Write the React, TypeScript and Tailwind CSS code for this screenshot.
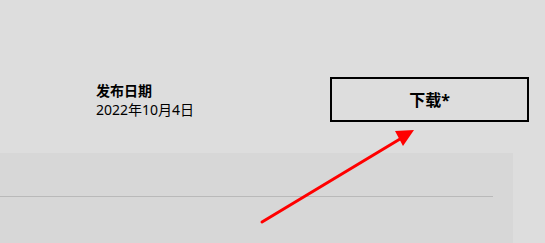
import React from "react";

export default function App() {
  return (
    <div
      className="relative w-[545px] h-[243px] overflow-hidden bg-[#dddddd] text-black"
      style={{ fontFamily: '"Noto Sans", "Noto Sans CJK SC", sans-serif' }}
    >
      <div className="flex h-[153px] items-start">
        <div className="ml-[96px] mt-[81px] flex flex-col leading-[19px] text-[14px]">
          <span className="font-bold">发布日期</span>
          <span>2022年10月4日</span>
        </div>
        <button className="ml-auto mr-[16px] mt-[77px] flex h-[45px] w-[199px] items-center justify-center border-2 border-black text-[16px] font-bold">
          下载*
        </button>
      </div>
      <div className="h-[90px] w-[513px] bg-[#d7d7d7] pt-[43px] pr-[20px]">
        <div className="h-px bg-[#b9b9b9]" />
      </div>
      <svg
        className="absolute left-0 top-0 pointer-events-none"
        width="545"
        height="243"
        viewBox="0 0 545 243"
      >
        <line x1="262" y1="222" x2="400" y2="139" stroke="#ff0000" strokeWidth="3" strokeLinecap="round" />
        <polygon points="414,130 395,131 403,146" fill="#ff0000" />
      </svg>
    </div>
  );
}
